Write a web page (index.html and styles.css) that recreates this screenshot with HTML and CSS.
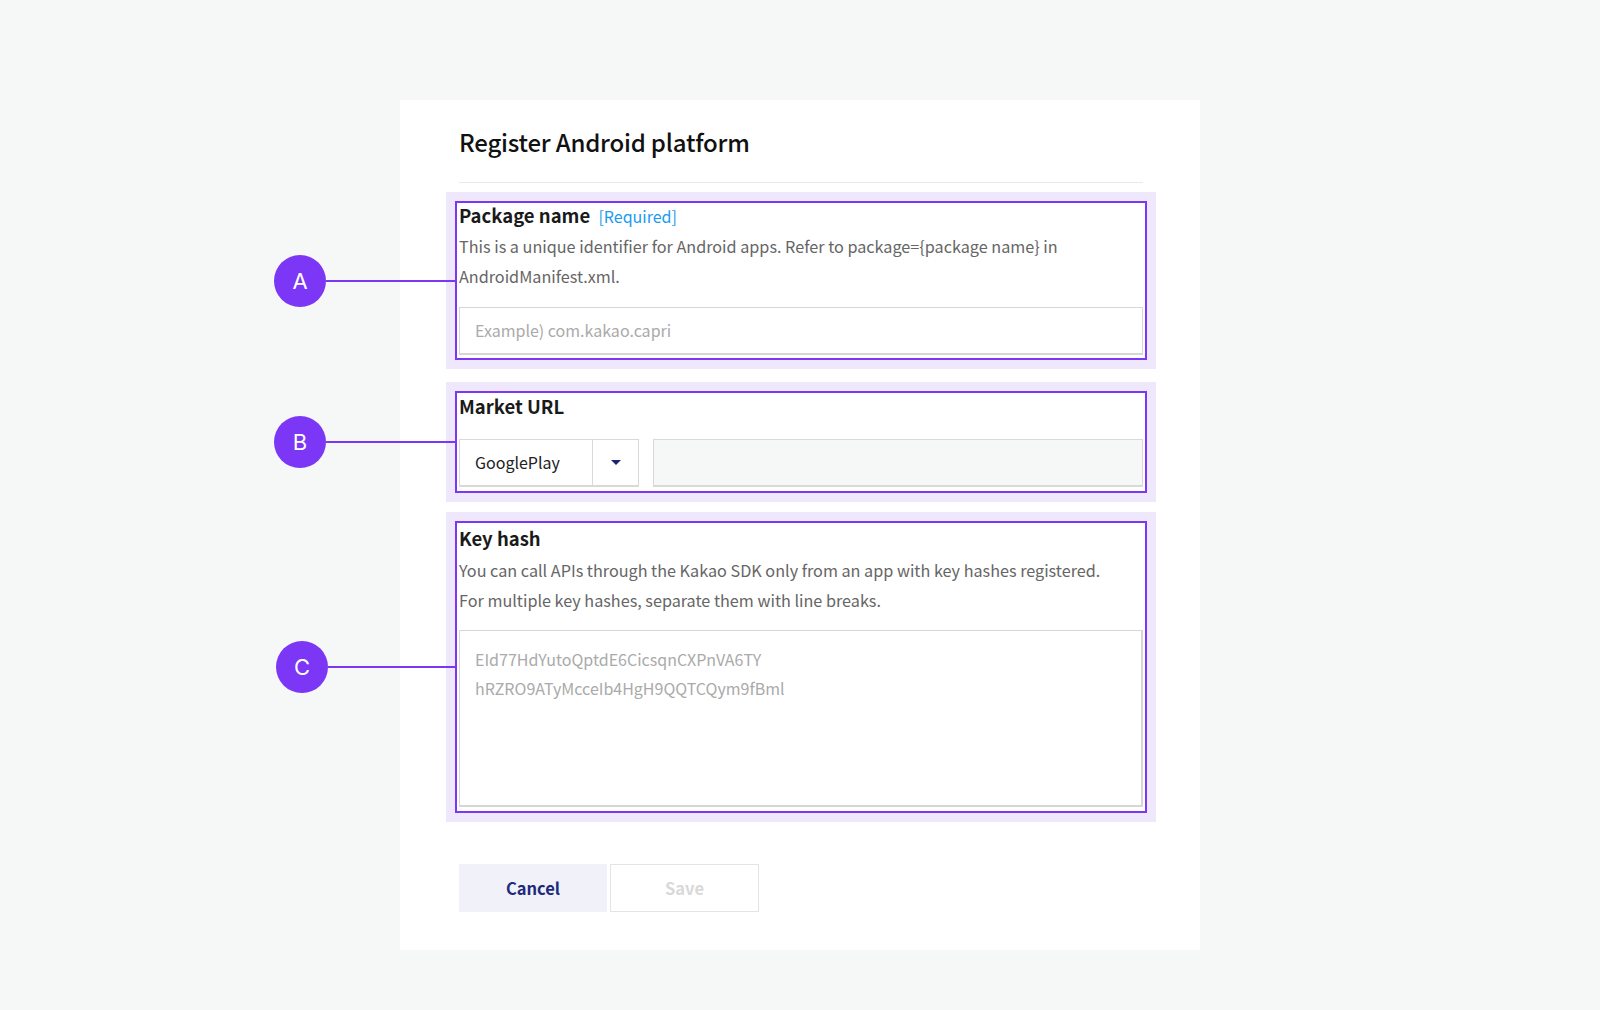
FILE: index.html
```html
<!DOCTYPE html>
<html lang="en">
<head>
<meta charset="utf-8">
<title>Register Android platform</title>
<link rel="stylesheet" href="styles.css">
</head>
<body>
<div class="page">
  <div class="card">
    <h1 class="title">Register Android platform</h1>
    <div class="divider"></div>

    <section class="hl hl-a">
      <div class="marker marker-a"><span class="dot">A</span><span class="wire"></span></div>
      <div class="box box-a">
        <div class="label">Package name <span class="req">[Required]</span></div>
        <p class="desc">This is a unique identifier for Android apps. Refer to package={package name} in<br>AndroidManifest.xml.</p>
        <input class="field field-a" type="text" placeholder="Example) com.kakao.capri">
      </div>
    </section>

    <section class="hl hl-b">
      <div class="marker marker-b"><span class="dot">B</span><span class="wire"></span></div>
      <div class="box box-b">
        <div class="label">Market URL</div>
        <div class="market-row">
          <div class="select">
            <span class="select-value">GooglePlay</span>
            <span class="select-btn"><span class="caret"></span></span>
          </div>
          <div class="url-field"></div>
        </div>
      </div>
    </section>

    <section class="hl hl-c">
      <div class="marker marker-c"><span class="dot dot-c">C</span><span class="wire"></span></div>
      <div class="box box-c">
        <div class="label">Key hash</div>
        <p class="desc desc-c">You can call APIs through the Kakao SDK only from an app with key hashes registered.<br>For multiple key hashes, separate them with line breaks.</p>
        <div class="textarea">
          <div class="ph">EId77HdYutoQptdE6CicsqnCXPnVA6TY</div>
          <div class="ph">hRZRO9ATyMcceIb4HgH9QQTCQym9fBml</div>
        </div>
      </div>
    </section>

    <div class="actions">
      <button class="btn btn-cancel">Cancel</button>
      <button class="btn btn-save">Save</button>
    </div>
  </div>
</div>
</body>
</html>
```

FILE: styles.css
```css
* { box-sizing: border-box; }

html, body {
  margin: 0;
  padding: 0;
  background: #f6f7f7;
  font-family: "Noto Sans CJK KR", "Noto Sans", sans-serif;
  color: #222;
}

.page {
  width: 1600px;
  height: 1010px;
  padding-top: 100px;
}

.card {
  width: 800px;
  height: 850px;
  margin: 0 auto;
  background: #ffffff;
  padding: 24px 57px 0 59px;
}

.title {
  margin: 0;
  font-size: 24px;
  line-height: 36px;
  font-weight: 500;
  color: #111;
  letter-spacing: -0.2px;
}

.divider {
  margin-top: 22px;
  height: 1px;
  background: #e9e9e9;
}

.hl {
  position: relative;
  margin: 0 -13px;
  padding: 9px;
  background: #efe8fd;
}

.hl-a { margin-top: 9px; }
.hl-b { margin-top: 13px; }
.hl-c { margin-top: 10px; }

.box {
  border: 2px solid #7b36f6;
  background: #ffffff;
  padding: 2px 2px 3px 2px;
}

.box-b { padding: 3px 2px 4px 2px; }
.box-c { padding: 5px 2px 4px 2px; }

.label {
  font-size: 18.5px;
  line-height: 20px;
  font-weight: 700;
  color: #1a1a1a;
}

.req {
  font-size: 16px;
  font-weight: 400;
  color: #1a9bf0;
  margin-left: 4px;
}

.desc {
  margin: 5px 0 0 0;
  font-size: 16.2px;
  line-height: 30px;
  color: #666666;
}

.desc-c { margin-top: 7px; }

.field {
  display: block;
  width: 100%;
  height: 48px;
  margin-top: 16px;
  border: 1px solid #d6d6d6;
  border-bottom-width: 2px;
  padding: 0 15px 2px 15px;
  font-family: inherit;
  font-size: 16px;
  color: #333;
  background: #fff;
  outline: none;
}

.field::placeholder { color: #aaaaaa; }

.market-row {
  display: flex;
  gap: 14px;
  margin-top: 23px;
}

.select {
  display: flex;
  width: 180px;
  height: 48px;
  border: 1px solid #d9d9d9;
  border-bottom-width: 2px;
}

.select-value {
  flex: 1;
  padding-left: 15px;
  font-size: 16px;
  line-height: 44px;
  color: #222;
}

.select-btn {
  width: 46px;
  border-left: 1px solid #d9d9d9;
  display: flex;
  align-items: center;
  justify-content: center;
}

.caret {
  width: 0;
  height: 0;
  border-left: 5px solid transparent;
  border-right: 5px solid transparent;
  border-top: 5px solid #1b2470;
}

.url-field {
  flex: 1;
  height: 48px;
  border: 1px solid #d9d9d9;
  border-bottom-width: 2px;
  background: #f6f7f7;
}

.textarea {
  height: 177px;
  margin-top: 15px;
  border: 1px solid #d6d6d6;
  border-width: 1px 2px 2px 1px;
  padding: 14px 15px;
}

.ph {
  font-size: 16px;
  line-height: 29px;
  color: #aaaaaa;
}

.actions {
  display: flex;
  gap: 3px;
  margin-top: 42px;
}

.btn {
  height: 48px;
  font-family: inherit;
  font-size: 16.5px;
  font-weight: 700;
  padding: 0;
  cursor: pointer;
}

.btn-cancel {
  width: 148px;
  border: none;
  background: #f1f2f9;
  color: #1e2a7b;
}

.btn-save {
  width: 149px;
  border: 1px solid #e4e4e4;
  background: #ffffff;
  color: #d9d9d9;
}

/* annotation markers */
.marker {
  position: absolute;
  top: 50%;
  left: -172px;
  display: flex;
  align-items: center;
  transform: translateY(-50%);
}

.marker-c { left: -170px; }

.dot {
  width: 52px;
  height: 52px;
  border-radius: 50%;
  background: #7b36f6;
  color: #ffffff;
  display: flex;
  align-items: center;
  justify-content: center;
  font-family: Inter, Roboto, sans-serif;
  font-size: 22px;
  font-weight: 400;
}

.wire {
  display: block;
  width: 130px;
  height: 2px;
  background: #7b36f6;
}

.marker-c .wire { width: 128px; }
```
